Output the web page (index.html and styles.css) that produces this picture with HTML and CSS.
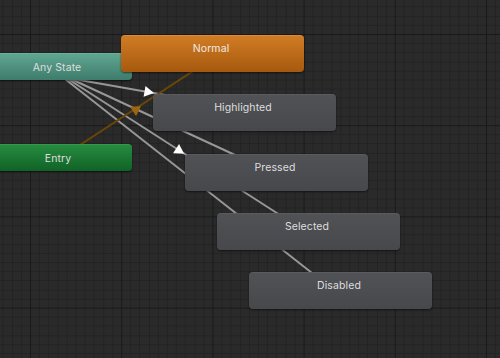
FILE: index.html
```html
<!DOCTYPE html>
<html>
<head>
<meta charset="utf-8">
<link rel="stylesheet" href="styles.css">
</head>
<body>
<div class="graph">
  <svg class="layer" width="500" height="358" viewBox="0 0 500 358">
    <defs>
      <pattern id="grid" x="30" y="34" width="91.2" height="91.2" patternUnits="userSpaceOnUse">
        <g fill="#232323" shape-rendering="crispEdges">
          <rect x="9.12" y="0" width="1" height="91.2"/>
          <rect x="18.24" y="0" width="1" height="91.2"/>
          <rect x="27.36" y="0" width="1" height="91.2"/>
          <rect x="36.48" y="0" width="1" height="91.2"/>
          <rect x="45.6" y="0" width="1" height="91.2"/>
          <rect x="54.72" y="0" width="1" height="91.2"/>
          <rect x="63.84" y="0" width="1" height="91.2"/>
          <rect x="72.96" y="0" width="1" height="91.2"/>
          <rect x="82.08" y="0" width="1" height="91.2"/>
          <rect y="9.12" x="0" height="1" width="91.2"/>
          <rect y="18.24" x="0" height="1" width="91.2"/>
          <rect y="27.36" x="0" height="1" width="91.2"/>
          <rect y="36.48" x="0" height="1" width="91.2"/>
          <rect y="45.6" x="0" height="1" width="91.2"/>
          <rect y="54.72" x="0" height="1" width="91.2"/>
          <rect y="63.84" x="0" height="1" width="91.2"/>
          <rect y="72.96" x="0" height="1" width="91.2"/>
          <rect y="82.08" x="0" height="1" width="91.2"/>
        </g>
        <g fill="#191919" shape-rendering="crispEdges">
          <rect x="0" y="0" width="1" height="91.2"/>
          <rect x="0" y="0" height="1" width="91.2"/>
        </g>
      </pattern>
    </defs>
    <rect width="500" height="358" fill="url(#grid)"/>
    <g stroke="#979797" stroke-width="2" fill="none">
      <line x1="74" y1="79" x2="244" y2="109"/>
      <line x1="71" y1="79" x2="276" y2="174"/>
      <line x1="68" y1="79" x2="308" y2="233"/>
      <line x1="65" y1="79" x2="340" y2="295"/>
    </g>
    <g fill="#ffffff">
      <polygon points="6,0 -3.5,5.5 -3.5,-5.5" transform="translate(148 92) rotate(10)"/>
      <polygon points="6,0 -3.5,5.5 -3.5,-5.5" transform="translate(179 150.5) rotate(33)"/>
    </g>
    <line x1="57" y1="160" x2="212" y2="58.6" stroke="#6a4606" stroke-width="2"/>
    <polygon points="6,0 -3.5,5.5 -3.5,-5.5" fill="#9c6510" transform="translate(136 109.5) rotate(-33)"/>
  </svg>

  <div class="node special any">Any State</div>
  <div class="node special entry">Entry</div>
  <div class="node state normal">Normal</div>
  <div class="node state highlighted">Highlighted</div>
  <div class="node state pressed">Pressed</div>
  <div class="node state selected">Selected</div>
  <div class="node state disabled">Disabled</div>
</div>
</body>
</html>
```

FILE: styles.css
```css
html, body {
  margin: 0;
  padding: 0;
  width: 500px;
  height: 358px;
  overflow: hidden;
  background: #2a2a2a;
}

.graph {
  position: relative;
  width: 500px;
  height: 358px;
  background: #2a2a2a;
  overflow: hidden;
  font-family: "Inter", "Noto Sans", sans-serif;
  font-size: 10.5px;
  color: #dedede;
}

.layer {
  position: absolute;
  left: 0;
  top: 0;
  display: block;
}

.node {
  position: absolute;
  box-sizing: border-box;
  text-align: center;
  border-radius: 4px;
  box-shadow: 0 1px 2px rgba(0, 0, 0, 0.55);
  white-space: nowrap;
  letter-spacing: 0.1px;
}

.special {
  height: 27px;
  line-height: 27px;
}

.state {
  width: 183px;
  height: 37px;
  padding-top: 6px;
  line-height: 13px;
  background: linear-gradient(#505256, #46484b);
  border-top: 1px solid #595b5f;
  padding-right: 3px;
}

.any {
  left: -18px;
  top: 53px;
  width: 150px;
  background: linear-gradient(#5fa691, #3e7c6b);
  border-top: 1px solid #6ab19c;
}

.entry {
  left: -16px;
  top: 144px;
  width: 148px;
  background: linear-gradient(#268b40, #106226);
  border-top: 1px solid #33984c;
}

.normal {
  left: 121px;
  top: 35px;
  background: linear-gradient(#d17c24, #a6590e);
  border-top: 1px solid #dc8a34;
  color: #efe9e2;
}

.highlighted { left: 153px; top: 94px; }
.pressed { left: 185px; top: 154px; }
.selected { left: 217px; top: 213px; }
.disabled { left: 249px; top: 272px; }
```
